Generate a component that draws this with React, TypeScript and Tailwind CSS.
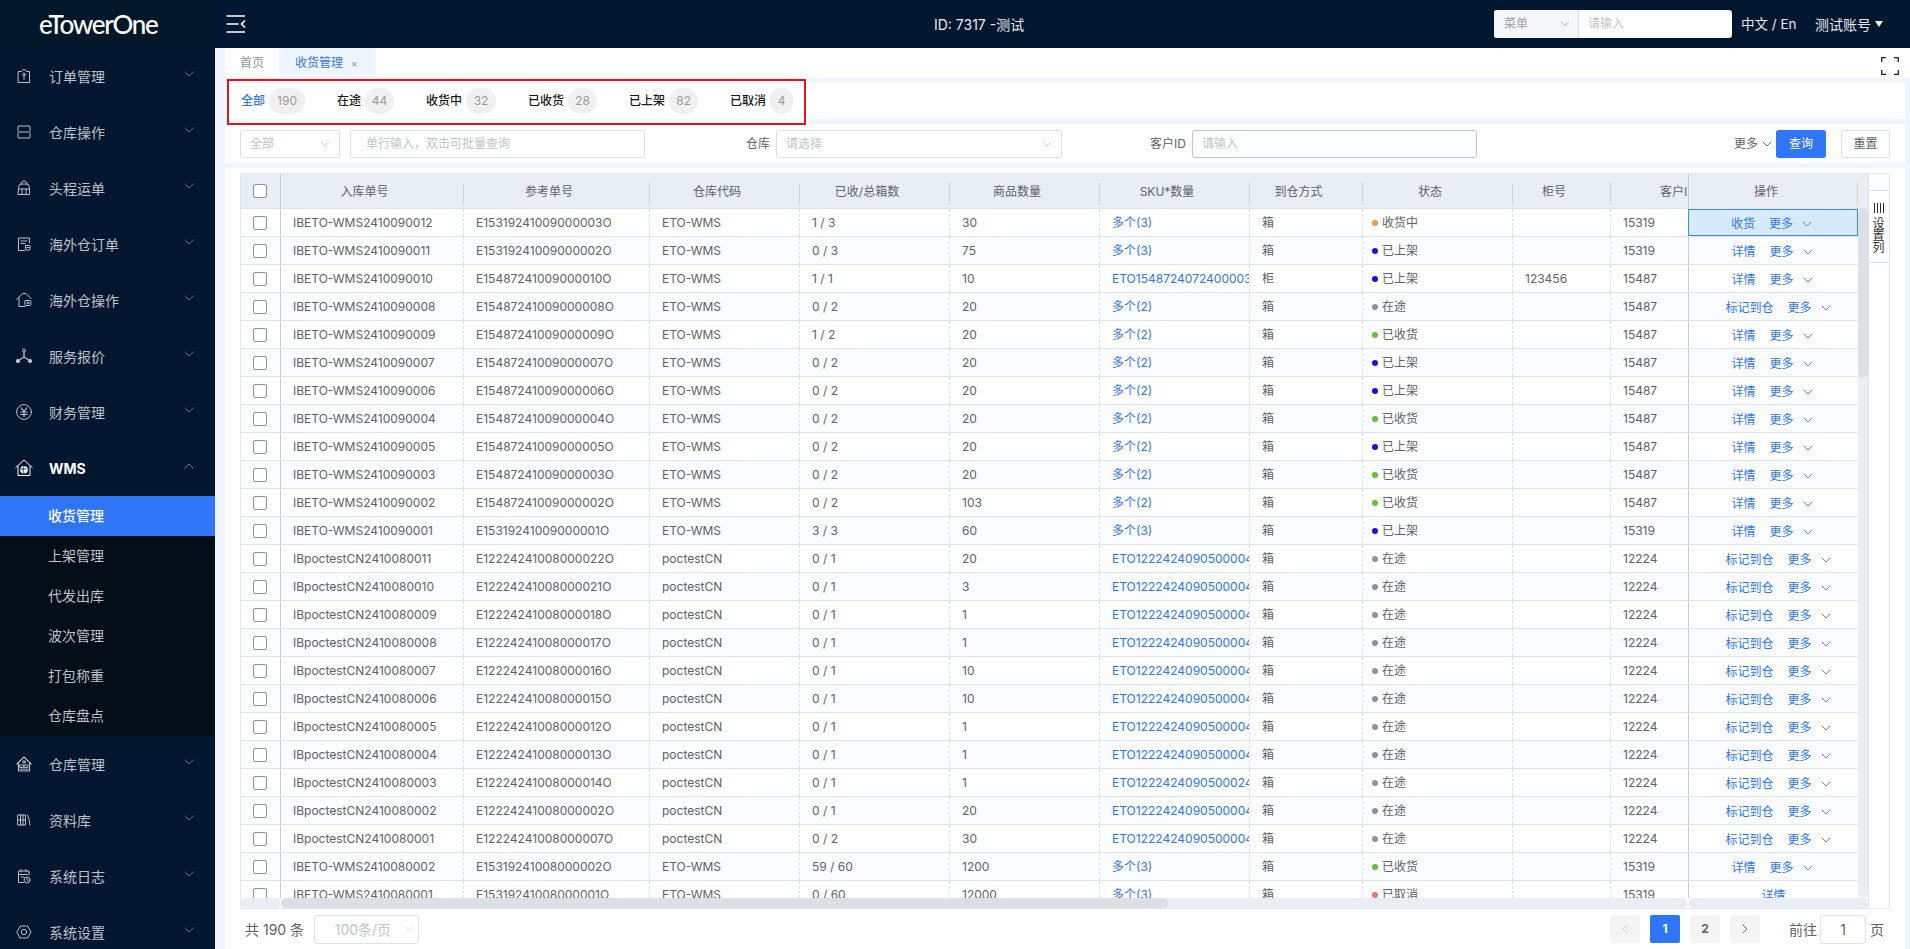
import React from 'react';
import { ChevronDown, ChevronUp, ChevronLeft, ChevronRight } from 'lucide-react';

const I = ({ children, size = 16, box = 16 }: { children: React.ReactNode; size?: number; box?: number }) => (
  <svg width={size} height={size} viewBox={`0 0 ${box} ${box}`} fill="none" stroke="currentColor" strokeWidth="1" strokeLinecap="round" strokeLinejoin="round" className="shrink-0">
    {children}
  </svg>
);

const menuIcons: Record<string, React.ReactNode> = {
  order: <I><path d="M2.500 3.500h3L8 1l2.500 2.500h3v11h-11z" /><circle cx="8" cy="6.500" r="1.300" /><path d="M8 7.800v3.700" /></I>,
  op: <I><path d="M2 6.500V2.800A.8.8 0 0 1 2.800 2h10.400a.8.8 0 0 1 .8.8v3.700M2 8h12M2 9.500v3.700a.8.8 0 0 0 .8.8h10.400a.8.8 0 0 0 .8-.8V9.500" /></I>,
  trunk: <I><path d="M5 4V2.500L8 .8l3 1.700V4M2.500 7.500A3.500 3.500 0 0 1 6 4h4a3.500 3.500 0 0 1 3.500 3.500V14.500h-11zM2.500 9h11M6 9v5.500M10 9v5.500" /></I>,
  doc: <I><path d="M13.500 7V2h-11v12.500h6M5 5h6M5 7.500h4" /><rect x="9.500" y="9.500" width="4.500" height="4.500" rx=".5" /><path d="M11 11.500h1.800" /></I>,
  house: <I><path d="M.8 7.500 6.500 1.500h3.500L15 6.500M3 6v8.500h6" /><rect x="8.800" y="8.500" width="6" height="5" rx=".8" /><circle cx="11.800" cy="11" r="1" /></I>,
  hub: <I><circle cx="8" cy="2.500" r="1.500" /><circle cx="2" cy="13" r="1.700" fill="currentColor" /><circle cx="14" cy="13" r="1.700" fill="currentColor" /><path d="M8 4v5M8 9l-4.700 3M8 9l4.700 3" strokeWidth="1.300" /></I>,
  money: <I><circle cx="8" cy="8" r="7.400" /><path d="M5.300 3.800 8 7.500l2.700-3.700M4.800 8h6.400M4.800 10.500h6.400M8 7.500v5" strokeWidth="1.200" /></I>,
  wms: <I size={18} box={18}><path d="M.8 8.500 9 1l8.200 7.500M3 7.500v9h12v-9" /><circle cx="9" cy="10.800" r="3.800" fill="#fff" stroke="none" /><path d="M6 10h5M9 7.500c-1.300 2-1.300 4 0 6.500" stroke="#031630" strokeWidth=".8" /></I>,
  ware: <I><path d="M1 8 8 1l7 7M2.500 6.500v8.500h11V6.500" strokeWidth="1.200" /><circle cx="8" cy="6" r="1.300" /><rect x="4.200" y="9" width="3.200" height="2.500" /><rect x="8.600" y="9" width="3.200" height="2.500" /><path d="M4.200 13.200h7.600" /></I>,
  lib: <I><path d="M2 3h7.500v10H2zM4.500 3v10M7 3v10M2 8h7.500M11.500 3c1.500 3 2 6.500 2.500 10" /></I>,
  log: <I><path d="M13 7V3H2.500v11.500h5M2.500 6.500h9M5 1.500V4M10 1.500V4M5 9h3" /><circle cx="11" cy="12" r="3" /><path d="M11 10.500V12l1 .8" /></I>,
  gear: <I><path d="M1 8 4.500 1.800 6.500 2.500 8 1.500l1.500 1 2-.7L15 8l-3.500 6.200-2-.7-1.500 1-1.500-1-2 .7z" /><circle cx="8" cy="8" r="2.700" /></I>,
};

const menuTop = [
  ['订单管理', 'order'], ['仓库操作', 'op'], ['头程运单', 'trunk'], ['海外仓订单', 'doc'], ['海外仓操作', 'house'], ['服务报价', 'hub'], ['财务管理', 'money'],
];
const menuBottom = [['仓库管理', 'ware'], ['资料库', 'lib'], ['系统日志', 'log'], ['系统设置', 'gear']];
const subs = ['收货管理', '上架管理', '代发出库', '波次管理', '打包称重', '仓库盘点'];

const MenuItem = ({ label, icon }: { label: string; icon: string }) => (
  <div className="flex h-14 shrink-0 items-center pl-[14px] text-[14px] text-[#bcc2ca]">
    <span className="flex w-5 justify-center">{menuIcons[icon]}</span>
    <span className="ml-[15px]">{label}</span>
    <ChevronDown size={16} strokeWidth={1.2} className="ml-auto mb-1 mr-[18px] text-[#76818f]" />
  </div>
);

const Sidebar = () => (
  <aside className="flex h-full w-[215px] shrink-0 flex-col overflow-hidden bg-[#031630]">
    <div className="flex h-12 shrink-0 items-center bg-[#03172a] pl-[39px] text-[26px] font-medium leading-none tracking-[-0.05em] text-white [font-family:Lato,sans-serif]">
      eTowerOne
    </div>
    {menuTop.map(([l, i]) => <MenuItem key={l} label={l} icon={i} />)}
    <div className="flex h-14 shrink-0 items-center pl-[14px] text-[14px] font-bold text-white">
      <span className="flex w-5 justify-center">{menuIcons.wms}</span>
      <span className="ml-[15px]">WMS</span>
      <ChevronUp size={16} strokeWidth={1.2} className="ml-auto mb-1 mr-[18px] text-[#8d97a3]" />
    </div>
    <div className="shrink-0 bg-[#020d18]">
      {subs.map((s, i) => (
        <div key={s} className={i === 0 ? 'flex h-10 items-center bg-[#2e75f7] pb-[2px] pl-[48px] text-[14px] font-medium text-white' : 'flex h-10 items-center pb-[2px] pl-[48px] text-[14px] text-[#bcc2ca]'}>{s}</div>
      ))}
    </div>
    {menuBottom.map(([l, i]) => <MenuItem key={l} label={l} icon={i} />)}
  </aside>
);

const TopBar = () => (
  <header className="flex h-12 shrink-0 items-center bg-[#01162f] pl-[11px] text-[14px] text-[#e8eaed]">
    <svg width="20" height="18" viewBox="0 0 20 18" fill="none" stroke="#fff" strokeWidth="1.6" className="shrink-0">
      <path d="M0.500 1h18.500M0.500 9h12M0.500 17h18.500" />
      <path d="M19 5.500 15.500 9l3.500 3.500" />
    </svg>
    <div className="ml-[688px] w-[87px] whitespace-nowrap">ID: 7317 -测试</div>
    <div className="ml-[473px] flex h-7 w-[238px] shrink-0 overflow-hidden rounded-[3px] bg-white text-[12px]">
      <div className="flex w-[85px] items-center justify-between border-r border-[#dcdfe6] bg-[#f5f7fa] pl-[10px] pr-[5px] text-[#9a9fa8]">
        菜单<ChevronDown size={16} strokeWidth={1} className="text-[#9a9fa8]" />
      </div>
      <div className="flex items-center pl-[9px] text-[#c0c4cc]">请输入</div>
    </div>
    <div className="ml-[9px] w-[65px] shrink-0 whitespace-nowrap text-[13.500px]">中文 / En</div>
    <div className="ml-[9px] flex shrink-0 items-center whitespace-nowrap">
      测试账号
      <svg width="8" height="6" viewBox="0 0 8 6" className="ml-1"><path d="M0 0h8L4 6z" fill="#fff" /></svg>
    </div>
  </header>
);

const Tabs = () => (
  <div className="flex h-[30px] shrink-0 items-stretch bg-white text-[12px]">
    <div className="flex w-[54px] items-center justify-center text-[#8f949c]">首页</div>
    <div className="flex w-[97px] items-center bg-[#f0f6ff] pl-4 text-[#2e75f7]">
      收货管理<span className="ml-[8px] text-[10px] leading-none text-[#8f949c]">×</span>
    </div>
    <svg width="18" height="18" viewBox="0 0 18 18" fill="none" stroke="#222" strokeWidth="1.3" className="ml-auto mr-[11px] mt-[9px]">
      <path d="M0.700 5V0.700H5M13 0.700h4.300V5M17.300 13v4.300H13M5 17.300H0.700V13" />
    </svg>
  </div>
);

const statusTabs: [string, string, string][] = [
  ['全部', '190', 'w-[36px]'], ['在途', '44', 'w-[29px]'], ['收货中', '32', 'w-[30px]'], ['已收货', '28', 'w-[29px]'], ['已上架', '82', 'w-[29px]'], ['已取消', '4', 'w-[23px]'],
];

const StatusBar = () => (
  <section className="relative mt-[5px] flex h-9 shrink-0 items-center gap-8 bg-white pl-4 text-[12px]">
    {statusTabs.map(([l, n, w], i) => (
      <div key={l} className="flex items-center gap-1">
        <span className={i === 0 ? 'font-medium text-[#2e75f7]' : 'font-medium text-[#1a1a1a]'}>{l}</span>
        <span className={`${w} flex h-[26px] items-center justify-center rounded-full bg-[#f0f0f0] text-[#9a9a9a]`}>{n}</span>
      </div>
    ))}
    <div className="absolute left-[1.500px] top-[-4px] h-[46px] w-[579px] border-2 border-[#e3141b]" />
  </section>
);

const Field = ({ w, text, chevron, cls = 'border-[#dcdfe6]' }: { w: string; text: string; chevron?: boolean; cls?: string }) => (
  <div className={`${w} ${cls} flex h-7 shrink-0 items-center justify-between rounded-[3px] border pl-[9px] pr-[6px] text-[12px] text-[#c0c4cc]`}>
    {text}
    {chevron && <ChevronDown size={16} strokeWidth={1} className="text-[#b4b8bf]" />}
  </div>
);

const FilterBar = () => (
  <section className="mt-[5px] flex h-[39px] shrink-0 items-center bg-white pl-[15px] pr-[15px] text-[12px] text-[#606266]">
    <Field w="w-[100px]" text="全部" chevron />
    <div className="ml-[10px]"><div className="flex h-7 w-[295px] items-center rounded-[3px] border border-[#dcdfe6] pl-[15px] text-[#c0c4cc]">单行输入，双击可批量查询</div></div>
    <span className="ml-[101px] mr-[6px]">仓库</span>
    <Field w="w-[286px]" text="请选择" chevron />
    <span className="ml-[88px] mr-[6px]">客户ID</span>
    <Field w="w-[285px]" text="请输入" cls="border-[#c0c4cc]" />
    <span className="ml-auto flex items-center">更多<ChevronDown size={16} strokeWidth={1.3} className="ml-[1px] text-[#606266]" /></span>
    <button className="ml-[1px] h-7 w-[50px] rounded-[3px] bg-[#2e75f7] text-white">查询</button>
    <button className="ml-[15px] h-7 w-[49px] rounded-[3px] border border-[#dcdfe6] bg-white">重置</button>
  </section>
);

type Row = [string, string, string, string, string, string, string, string, string, string];

const E = 'ETO-WMS';
const P = 'poctestCN';
const S3 = '多个(3)';
const S2 = '多个(2)';
const Long = 'ETO12224240905000044';
const rows: Row[] = [
  ['IBETO-WMS2410090012', 'E15319241009000003O', E, '1 / 3', '30', S3, '箱', '收货中', '', '15319'],
  ['IBETO-WMS2410090011', 'E15319241009000002O', E, '0 / 3', '75', S3, '箱', '已上架', '', '15319'],
  ['IBETO-WMS2410090010', 'E15487241009000010O', E, '1 / 1', '10', 'ETO154872407240000344', '柜', '已上架', '123456', '15487'],
  ['IBETO-WMS2410090008', 'E15487241009000008O', E, '0 / 2', '20', S2, '箱', '在途', '', '15487'],
  ['IBETO-WMS2410090009', 'E15487241009000009O', E, '1 / 2', '20', S2, '箱', '已收货', '', '15487'],
  ['IBETO-WMS2410090007', 'E15487241009000007O', E, '0 / 2', '20', S2, '箱', '已上架', '', '15487'],
  ['IBETO-WMS2410090006', 'E15487241009000006O', E, '0 / 2', '20', S2, '箱', '已上架', '', '15487'],
  ['IBETO-WMS2410090004', 'E15487241009000004O', E, '0 / 2', '20', S2, '箱', '已收货', '', '15487'],
  ['IBETO-WMS2410090005', 'E15487241009000005O', E, '0 / 2', '20', S2, '箱', '已上架', '', '15487'],
  ['IBETO-WMS2410090003', 'E15487241009000003O', E, '0 / 2', '20', S2, '箱', '已收货', '', '15487'],
  ['IBETO-WMS2410090002', 'E15487241009000002O', E, '0 / 2', '103', S2, '箱', '已收货', '', '15487'],
  ['IBETO-WMS2410090001', 'E15319241009000001O', E, '3 / 3', '60', S3, '箱', '已上架', '', '15319'],
  ['IBpoctestCN2410080011', 'E12224241008000022O', P, '0 / 1', '20', Long, '箱', '在途', '', '12224'],
  ['IBpoctestCN2410080010', 'E12224241008000021O', P, '0 / 1', '3', Long, '箱', '在途', '', '12224'],
  ['IBpoctestCN2410080009', 'E12224241008000018O', P, '0 / 1', '1', Long, '箱', '在途', '', '12224'],
  ['IBpoctestCN2410080008', 'E12224241008000017O', P, '0 / 1', '1', Long, '箱', '在途', '', '12224'],
  ['IBpoctestCN2410080007', 'E12224241008000016O', P, '0 / 1', '10', Long, '箱', '在途', '', '12224'],
  ['IBpoctestCN2410080006', 'E12224241008000015O', P, '0 / 1', '10', Long, '箱', '在途', '', '12224'],
  ['IBpoctestCN2410080005', 'E12224241008000012O', P, '0 / 1', '1', Long, '箱', '在途', '', '12224'],
  ['IBpoctestCN2410080004', 'E12224241008000013O', P, '0 / 1', '1', Long, '箱', '在途', '', '12224'],
  ['IBpoctestCN2410080003', 'E12224241008000014O', P, '0 / 1', '1', 'ETO12224240905000244', '箱', '在途', '', '12224'],
  ['IBpoctestCN2410080002', 'E12224241008000002O', P, '0 / 1', '20', Long, '箱', '在途', '', '12224'],
  ['IBpoctestCN2410080001', 'E12224241008000007O', P, '0 / 2', '30', Long, '箱', '在途', '', '12224'],
  ['IBETO-WMS2410080002', 'E15319241008000002O', E, '59 / 60', '1200', S3, '箱', '已收货', '', '15319'],
  ['IBETO-WMS2410080001', 'E15319241008000001O', E, '0 / 60', '12000', S3, '箱', '已取消', '', '15319'],
];

const dot: Record<string, string> = {
  收货中: 'bg-[#f59a3c]',
  已上架: 'bg-[#1a0fe0]',
  在途: 'bg-[#8f949e]',
  已收货: 'bg-[#63c22f]',
  已取消: 'bg-[#f56c6c]',
};

const widths = ['w-[183px]', 'w-[186px]', 'w-[150px]', 'w-[150px]', 'w-[150px]', 'w-[150px]', 'w-[113px]', 'w-[150px]', 'w-[98px]', 'w-[77px]'];
const heads = ['入库单号', '参考单号', '仓库代码', '已收/总箱数', '商品数量', 'SKU*数量', '到仓方式', '状态', '柜号'];

const Box = () => <span className="block h-[14px] w-[14px] rounded-[2px] border border-[#8d929b] bg-white" />;

const Header = () => (
  <div className="flex h-[35px] shrink-0 border-b border-[#dfe3ea] bg-[#e9edf4] text-[12px] text-[#606266]">
    <div className="flex w-[40px] shrink-0 items-center justify-center border-r border-[#c8ccd3] pr-[1px]"><Box /></div>
    {heads.map((h, i) => (
      <div key={h} className={`${widths[i]} mb-[3px] mt-[9px] flex h-[22px] shrink-0 justify-center border-r border-[#ced2d9] pr-[15px]`}>{h}</div>
    ))}
    <div className="w-[77px] shrink-0 overflow-hidden pr-[1px]">
      <div className="mt-[9px] w-[150px] pr-[16px] text-center">客户ID</div>
    </div>
    <div className="flex w-[170px] shrink-0 border-l border-[#c8ccd3]">
      <div className="mb-[3px] mt-[9px] h-[22px] w-full border-r border-[#ced2d9] pr-[14px] text-center">操作</div>
    </div>
    <div className="w-[10px] shrink-0" />
  </div>
);

const cellCls = 'flex h-full shrink-0 items-center overflow-hidden whitespace-nowrap border-r border-dashed border-[#dcdfe6] pl-[12px]';

const Op = ({ row, first }: { row: Row; first: boolean }) => {
  const st = row[7];
  const main = first ? '收货' : st === '在途' ? '标记到仓' : '详情';
  const shift = st === '在途' ? 'pl-[12px]' : '';
  const base = first
    ? 'flex h-full w-[170px] shrink-0 items-center justify-center border border-[#3d8de4] bg-[#d6eafc] pt-[2px] text-[#2e75f7]'
    : `${shift} flex h-full w-[170px] shrink-0 items-center justify-center border-l border-[#c8ccd3] pt-[2px] text-[#2e75f7]`;
  return (
    <div className={base}>
      <span>{main}</span>
      {st !== '已取消' && (
        <>
          <span className="ml-[14px]">更多</span>
          <ChevronDown size={16} strokeWidth={1.2} className="ml-[6px]" />
        </>
      )}
    </div>
  );
};

const TableRow = ({ row, i }: { row: Row; i: number }) => (
  <div className={i % 2 === 0 ? 'flex h-7 shrink-0 border-b border-[#dfe3ea] bg-white' : 'flex h-7 shrink-0 border-b border-[#dfe3ea] bg-[#fafcff]'}>
    <div className="flex h-full w-[40px] shrink-0 items-center justify-center border-r border-[#c8ccd3] pr-[1px]"><Box /></div>
    <div className={`${cellCls} ${widths[0]}`}>{row[0]}</div>
    <div className={`${cellCls} ${widths[1]}`}>{row[1]}</div>
    <div className={`${cellCls} ${widths[2]}`}>{row[2]}</div>
    <div className={`${cellCls} ${widths[3]}`}>{row[3]}</div>
    <div className={`${cellCls} ${widths[4]}`}>{row[4]}</div>
    <div className={`${cellCls} ${widths[5]} text-[#2e75f7]`}>{row[5]}</div>
    <div className={`${cellCls} ${widths[6]}`}>{row[6]}</div>
    <div className={`${cellCls} ${widths[7]} !pl-[9px]`}>
      <span className={`${dot[row[7]]} mr-1 h-[6px] w-[6px] rounded-full`} />
      {row[7]}
    </div>
    <div className={`${cellCls} ${widths[8]}`}>{row[8]}</div>
    <div className="flex h-full w-[77px] shrink-0 items-center pl-[12px]">{row[9]}</div>
    <Op row={row} first={i === 0} />
  </div>
);

const Table = () => (
  <div className="flex h-[736px] shrink-0 border border-[#e4e7ed] text-[12px] text-[#606266]">
    <div className="flex w-[1627px] shrink-0 flex-col">
      <Header />
      <div className="flex h-[689px] shrink-0">
        <div className="w-[1617px] shrink-0 overflow-hidden">
          {rows.map((r, i) => <TableRow key={r[0]} row={r} i={i} />)}
        </div>
        <div className="w-[10px] shrink-0 rounded-b-[5px] bg-[#e9edf4]">
          <div className="h-[169px] rounded-[5px] bg-[#dcdfe6]" />
        </div>
      </div>
      <div className="flex h-[10px] shrink-0">
        <div className="w-[39px] shrink-0 rounded-[4px] bg-[#e9edf4]" />
        <div className="ml-[1px] w-[1406px] shrink-0 rounded-[4px] bg-[#e9edf4]">
          <div className="h-full w-[887px] rounded-[5px] bg-[#dcdfe6]" />
        </div>
        <div className="ml-[2px] w-[179px] shrink-0 rounded-[4px] bg-[#e9edf4]" />
      </div>
    </div>
    <div className="flex w-[20px] shrink-0 flex-col border-l border-[#dfe3ea]">
      <div className="h-[17px] shrink-0 border-b border-[#dfe3ea]" />
      <div className="flex h-[72px] shrink-0 flex-col items-center border-b border-[#dfe3ea] pt-[12px] text-[#303133]">
        <svg width="12" height="10" viewBox="0 0 12 10" stroke="#303133" strokeWidth="1"><path d="M1.500 0v10M4.500 0v10M7.500 0v10M10.500 0v10" /></svg>
        <div className="mt-[5px] flex w-3 flex-col text-[12px] leading-[12px]"><span>设</span><span>置</span><span>列</span></div>
      </div>
    </div>
  </div>
);

const PageBtn = ({ children, cls }: { children: React.ReactNode; cls: string }) => (
  <div className={`${cls} flex h-7 w-[30px] items-center justify-center rounded-[2px] text-[12px] font-bold`}>{children}</div>
);

const Pagination = () => (
  <div className="flex flex-1 items-center pl-[5px] pr-[6px] text-[14px] text-[#606266]">
    <span>共 190 条</span>
    <div className="ml-[10px] flex h-[29px] w-[105px] items-center justify-end rounded-[3px] border border-[#dcdfe6] text-[#c0c4cc]">
      100条/页<ChevronDown size={14} strokeWidth={1} className="ml-[11px] mr-[2px]" />
    </div>
    <div className="ml-auto flex items-center gap-[10px]">
      <PageBtn cls="bg-[#f4f4f5] text-[#c0c4cc]"><ChevronLeft size={16} strokeWidth={1.3} /></PageBtn>
      <PageBtn cls="bg-[#2e75f7] text-white">1</PageBtn>
      <PageBtn cls="bg-[#f4f4f5] text-[#606266]">2</PageBtn>
      <PageBtn cls="bg-[#f4f4f5] text-[#606266]"><ChevronRight size={16} strokeWidth={1.3} /></PageBtn>
    </div>
    <span className="ml-[29px]">前往</span>
    <div className="ml-[3px] flex h-[29px] w-[46px] items-center justify-center rounded-[3px] border border-[#dcdfe6]">1</div>
    <span className="ml-[4px]">页</span>
  </div>
);

export default function App() {
  return (
    <div className="flex h-[949px] w-[1910px] overflow-hidden text-[12px] [font-family:Inter,'Noto_Sans_CJK_SC',sans-serif]">
      <Sidebar />
      <div className="flex h-full w-[1695px] flex-col">
        <TopBar />
        <main className="flex min-h-0 flex-1 flex-col bg-[#f0f6ff] pl-[10px]">
          <Tabs />
          <div className="flex min-h-0 flex-1 flex-col pr-[5px]">
            <StatusBar />
            <FilterBar />
            <section className="mt-[5px] flex min-h-0 flex-1 flex-col bg-white px-[15px] pt-[5px]">
              <Table />
              <Pagination />
            </section>
          </div>
        </main>
      </div>
    </div>
  );
}
